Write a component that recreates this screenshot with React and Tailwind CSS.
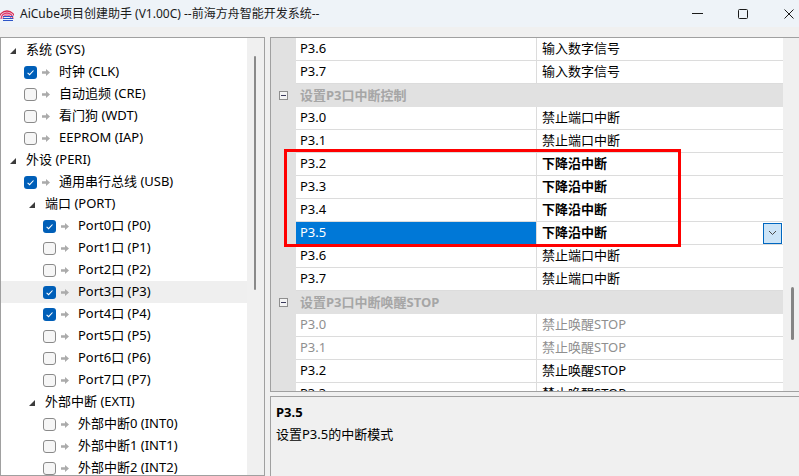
import React from "react";

const treeItems = [
  { lvl: 0, exp: true, text: "系统 (SYS)" },
  { lvl: 1, chk: true, text: "时钟 (CLK)" },
  { lvl: 1, chk: false, text: "自动追频 (CRE)" },
  { lvl: 1, chk: false, text: "看门狗 (WDT)" },
  { lvl: 1, chk: false, text: "EEPROM (IAP)" },
  { lvl: 0, exp: true, text: "外设 (PERI)" },
  { lvl: 1, chk: true, text: "通用串行总线 (USB)" },
  { lvl: 1, exp: true, text: "端口 (PORT)" },
  { lvl: 2, chk: true, text: "Port0口 (P0)" },
  { lvl: 2, chk: false, text: "Port1口 (P1)" },
  { lvl: 2, chk: false, text: "Port2口 (P2)" },
  { lvl: 2, chk: true, text: "Port3口 (P3)", hover: true },
  { lvl: 2, chk: true, text: "Port4口 (P4)" },
  { lvl: 2, chk: false, text: "Port5口 (P5)" },
  { lvl: 2, chk: false, text: "Port6口 (P6)" },
  { lvl: 2, chk: false, text: "Port7口 (P7)" },
  { lvl: 1, exp: true, text: "外部中断 (EXTI)" },
  { lvl: 2, chk: false, text: "外部中断0 (INT0)" },
  { lvl: 2, chk: false, text: "外部中断1 (INT1)" },
  { lvl: 2, chk: false, text: "外部中断2 (INT2)" },
];

const gridRows = [
  { name: "P3.6", value: "输入数字信号" },
  { name: "P3.7", value: "输入数字信号" },
  { header: "设置P3口中断控制" },
  { name: "P3.0", value: "禁止端口中断" },
  { name: "P3.1", value: "禁止端口中断" },
  { name: "P3.2", value: "下降沿中断", bold: true },
  { name: "P3.3", value: "下降沿中断", bold: true },
  { name: "P3.4", value: "下降沿中断", bold: true },
  { name: "P3.5", value: "下降沿中断", bold: true, selected: true },
  { name: "P3.6", value: "禁止端口中断" },
  { name: "P3.7", value: "禁止端口中断" },
  { header: "设置P3口中断唤醒STOP" },
  { name: "P3.0", value: "禁止唤醒STOP", dim: true },
  { name: "P3.1", value: "禁止唤醒STOP", dim: true },
  { name: "P3.2", value: "禁止唤醒STOP" },
  { name: "P3.3", value: "禁止唤醒STOP" },
];

const Expander = () => (
  <svg width="6" height="6" viewBox="0 0 6 6" className="mt-[2px]">
    <path d="M6 0 L6 6 L0 6 Z" fill="#3c3c3c" />
  </svg>
);

const Checkbox = ({ checked }) =>
  checked ? (
    <svg width="13" height="13" viewBox="0 0 13 13">
      <rect x="0" y="0" width="13" height="13" rx="3" fill="#005fb8" />
      <path d="M3.6 6.9 L5.6 8.7 L9.5 4.5" stroke="#fff" strokeWidth="1.1" fill="none" />
    </svg>
  ) : (
    <svg width="13" height="13" viewBox="0 0 13 13">
      <rect x="0.5" y="0.5" width="12" height="12" rx="2.5" fill="#f6f6f6" stroke="#8a8a8a" />
    </svg>
  );

const Arrow = () => (
  <svg width="8" height="7" viewBox="0 0 8 7">
    <path d="M0 2.3 H4 V0 L8 3.5 L4 7 V4.7 H0 Z" fill="#ababab" />
  </svg>
);

const TreeRow = ({ item }) => {
  if (item.exp) {
    return (
      <div
        className="flex h-[22px] items-center"
        style={{ paddingLeft: 9 + 19 * item.lvl }}
      >
        <Expander />
        <span className="ml-[10px] whitespace-nowrap">{item.text}</span>
      </div>
    );
  }
  return (
    <div
      className={`flex h-[22px] items-center ${item.hover ? "bg-[#efefef]" : ""}`}
      style={{ paddingLeft: 23 + 19 * (item.lvl - 1) }}
    >
      <Checkbox checked={item.chk} />
      <span className="ml-[5px] flex">
        <Arrow />
      </span>
      <span className="ml-[9px] whitespace-nowrap">{item.text}</span>
    </div>
  );
};

const GridRow = ({ row }) => {
  if (row.header) {
    return (
      <div className="flex h-[23px] items-center bg-[#e1e1e1]">
        <div className="flex w-[25px] items-center pl-[8px]">
          <svg width="9" height="9" viewBox="0 0 9 9">
            <rect x="0.5" y="0.5" width="8" height="8" fill="#f4f4f4" stroke="#8e8e8e" />
            <path d="M2 4.5 H7" stroke="#3b3b5c" strokeWidth="1" />
          </svg>
        </div>
        <span className="pl-[4px] font-bold text-[#a6a6a6] whitespace-nowrap">{row.header}</span>
      </div>
    );
  }
  const tone = row.dim ? "text-[#8f8f8f]" : "text-black";
  return (
    <div className="flex h-[23px]">
      <div className="w-[25px] bg-[#e1e1e1]" />
      <div
        className={`flex w-[241px] items-center border-b border-r border-[#dcdcdc] pl-[4px] ${
          row.selected ? "bg-[#0078d7] text-white" : tone
        }`}
      >
        {row.name}
      </div>
      <div className={`flex flex-1 items-center border-b border-[#dcdcdc] pl-[5px] ${tone}`}>
        <span className={`flex-1 whitespace-nowrap ${row.bold ? "font-bold" : ""}`}>{row.value}</span>
        {row.selected && (
          <div className="mr-px flex h-[21px] w-[19px] items-center justify-center border border-[#0067c0] bg-[#cce4f7]">
            <svg width="9" height="6" viewBox="0 0 9 6">
              <path d="M1 1 L4.5 4.5 L8 1" stroke="#4a4a4a" strokeWidth="1" fill="none" />
            </svg>
          </div>
        )}
      </div>
    </div>
  );
};

const Logo = () => (
  <svg width="14" height="14" viewBox="0 0 14 14">
    <path d="M1 12 A6 6 0 0 1 13 12" stroke="#e23c6e" strokeWidth="1.3" fill="none" />
    <path d="M3 12 A4 4 0 0 1 11 12" stroke="#ef6b93" strokeWidth="1.3" fill="none" />
    <path d="M-1 12 A8 8 0 0 1 15 12" stroke="#d8284f" strokeWidth="1.3" fill="none" />
    <path d="M3 9.5 H13 M3 11.5 H13 M3 13.5 H13" stroke="#2d55c8" strokeWidth="1" />
  </svg>
);

export default function App() {
  return (
    <div className="relative h-[476px] w-[799px] overflow-hidden bg-[#f0f0f0] font-['Noto_Sans','Noto_Sans_CJK_SC',sans-serif] text-[13px] text-black">
      {/* title bar */}
      <div className="flex h-[27px] items-center bg-[#eef3f8]">
        <div className="flex w-[20px] items-center">
          <Logo />
        </div>
        <span className="text-[12px] whitespace-nowrap text-[#1a1a1a]">
          AiCube项目创建助手 (V1.00C) --前海方舟智能开发系统--
        </span>
        <div className="ml-auto mr-[-13px] flex">
          <div className="flex h-[27px] w-[46px] items-center justify-center">
            <svg width="11" height="1" viewBox="0 0 11 1">
              <path d="M0 0.5 H11" stroke="#1a1a1a" />
            </svg>
          </div>
          <div className="flex h-[27px] w-[46px] items-center justify-center">
            <svg width="10" height="10" viewBox="0 0 10 10">
              <rect x="0.5" y="0.5" width="9" height="9" rx="1" fill="none" stroke="#1a1a1a" />
            </svg>
          </div>
          <div className="flex h-[27px] w-[46px] items-center justify-center">
            <svg width="10" height="10" viewBox="0 0 10 10">
              <path d="M0.5 0.5 L9.5 9.5 M9.5 0.5 L0.5 9.5" stroke="#1a1a1a" />
            </svg>
          </div>
        </div>
      </div>

      <div className="flex h-[449px] gap-[5px] pt-[10px]">
        {/* left tree */}
        <div className="flex w-[265px] border border-[#a0a0a0] bg-white">
          <div className="flex-1 overflow-hidden pt-px">
            {treeItems.map((item, i) => (
              <TreeRow key={i} item={item} />
            ))}
          </div>
          <div className="w-[17px] bg-[#f0f0f0] pt-[18px]">
            <div className="ml-[7px] h-[234px] w-[2px] rounded-full bg-[#8a8a8a]" />
          </div>
        </div>

        {/* right */}
        <div className="flex flex-1 flex-col">
          <div className="flex h-[355px] border-b border-l border-t border-[#a0a0a0] bg-white">
            <div className="w-[512px] overflow-hidden">
              {gridRows.map((row, i) => (
                <GridRow key={i} row={row} />
              ))}
            </div>
            <div className="flex-1 bg-[#f0f0f0] pt-[249px]">
              <div className="ml-[8px] h-[53px] w-[3px] rounded-full bg-[#858585]" />
            </div>
          </div>
          <div className="mt-[4px] flex-1 border-l border-t border-[#a0a0a0] bg-[#f0f0f0] pl-[5px] pt-[4px]">
            <div className="h-[22px] font-bold leading-[22px]">P3.5</div>
            <div className="h-[22px] leading-[22px]">设置P3.5的中断模式</div>
          </div>
        </div>
      </div>

      {/* highlight annotation */}
      <div className="absolute left-[284px] top-[149px] h-[98px] w-[397px] border-[3px] border-[#ff0000]" />
    </div>
  );
}
